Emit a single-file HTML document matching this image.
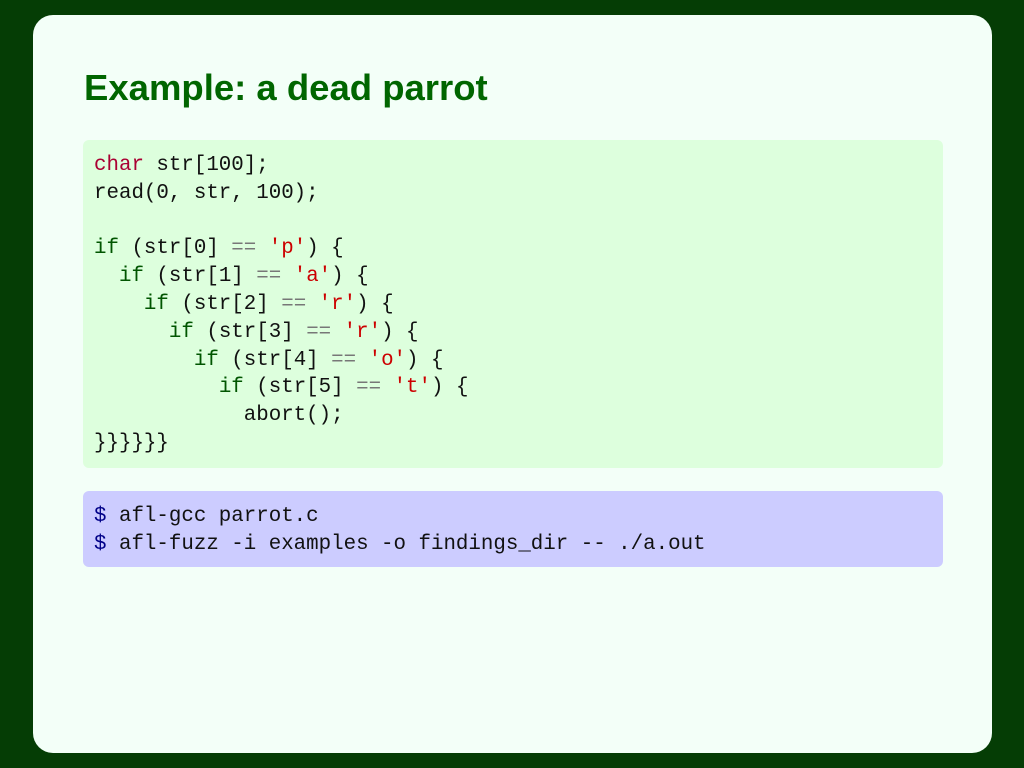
<!DOCTYPE html>
<html><head><style>
html,body{margin:0;padding:0;}
body{width:1024px;height:768px;background:#053d05;position:relative;overflow:hidden;}
.card{position:absolute;left:33px;top:15px;width:959px;height:738px;background:#f3fff8;border-radius:20px;}
h1{position:absolute;left:84px;top:66px;margin:0;font:bold 36.5px/44px "Liberation Sans",sans-serif;color:#006600;letter-spacing:0;}
pre{position:absolute;left:83px;width:860px;margin:0;border-radius:6px;font:20.8px/27.8px "Liberation Mono",monospace;color:#111;padding:0 0 0 11px;box-sizing:border-box;}
.a{top:140px;height:328px;background:#ddffdd;padding-top:12px;}
.b{top:491px;height:76px;background:#ccccff;padding-top:12px;}
.k{color:#aa0033}.g{color:#005500}.s{color:#cc0000}.o{color:#777}.d{color:#000088}
</style></head><body>
<div class="card"></div>
<h1>Example: a dead parrot</h1>
<pre class="a"><span class="k">char</span> str[100];
read(0, str, 100);

<span class="g">if</span> (str[0] <span class="o">==</span> <span class="s">'p'</span>) {
  <span class="g">if</span> (str[1] <span class="o">==</span> <span class="s">'a'</span>) {
    <span class="g">if</span> (str[2] <span class="o">==</span> <span class="s">'r'</span>) {
      <span class="g">if</span> (str[3] <span class="o">==</span> <span class="s">'r'</span>) {
        <span class="g">if</span> (str[4] <span class="o">==</span> <span class="s">'o'</span>) {
          <span class="g">if</span> (str[5] <span class="o">==</span> <span class="s">'t'</span>) {
            abort();
}}}}}}</pre>
<pre class="b"><span class="d">$</span> afl-gcc parrot.c
<span class="d">$</span> afl-fuzz -i examples -o findings_dir -- ./a.out</pre>
</body></html>
